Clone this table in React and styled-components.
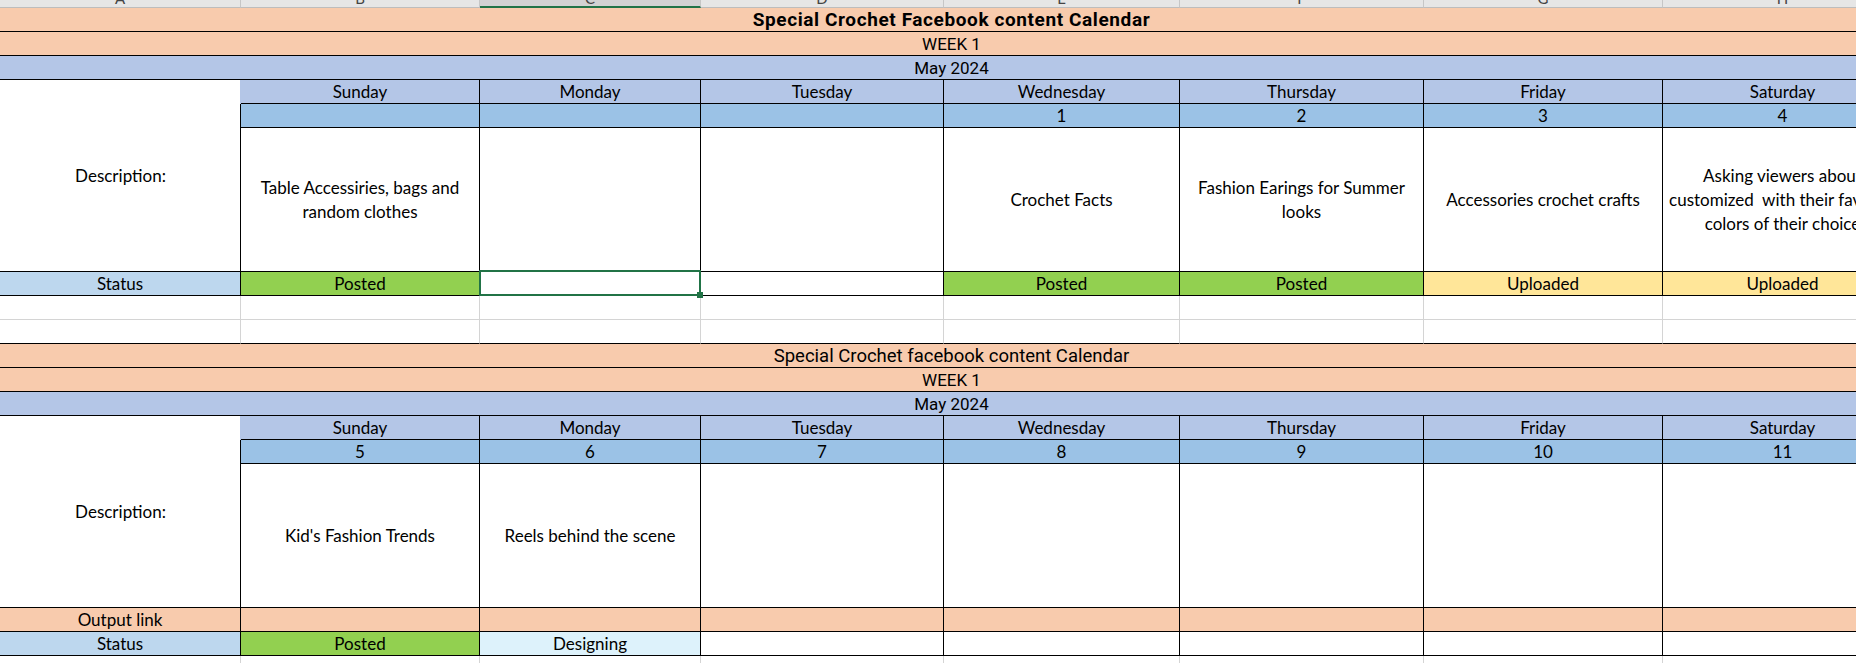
import React from 'react';
import styled, { createGlobalStyle, css } from 'styled-components';

const COLORS = {
  peach: '#f8cbad',
  lavender: '#b4c6e7',
  blue: '#9bc2e6',
  label: '#bdd7ee',
  green: '#92d050',
  yellow: '#ffe699',
  cyan: '#ddf2fb',
  grid: '#d4d4d4',
  ink: '#000000',
  excel: '#217346',
};

const STATUS_BG = {
  Posted: COLORS.green,
  Uploaded: COLORS.yellow,
  Designing: COLORS.cyan,
  '': '#ffffff',
};

const Global = createGlobalStyle`
  html, body { margin: 0; padding: 0; background: #ffffff; overflow: hidden; }
  body { font-family: Lato, "Liberation Sans", sans-serif; color: #000; }
`;

const Sheet = styled.div`
  display: grid;
  grid-template-columns: 241px 239px 221px 243px 236px 244px 239px 240px;
  grid-template-rows: 8px repeat(5, 24px) 144px repeat(8, 24px) 144px repeat(3, 24px);
  width: max-content;
  font-size: 17px;
  line-height: 20px;
`;

const HeadCell = styled.div`
  box-sizing: border-box;
  overflow: hidden;
  display: flex;
  justify-content: center;
  background: ${(p) => (p.$selected ? '#d2d2d2' : '#e6e6e6')};
  border-right: 1px solid #c6c6c6;
  border-bottom: ${(p) => (p.$selected ? `2px solid ${COLORS.excel}` : '1px solid #bdbdbd')};
  color: #444;
  font-size: 15px;
  line-height: 15px;
`;

const Letter = styled.span`
  margin-top: -9px;
`;

const cellBase = css`
  box-sizing: border-box;
  min-width: 0;
  display: flex;
  align-items: center;
  justify-content: center;
  text-align: center;
  white-space: pre;
  border-right: 1px solid ${(p) => (p.$grid ? COLORS.grid : COLORS.ink)};
  border-bottom: 1px solid ${(p) => (p.$gridBottom ? COLORS.grid : COLORS.ink)};
`;

const Banner = styled.div`
  box-sizing: border-box;
  grid-column: 1 / -1;
  display: flex;
  align-items: center;
  justify-content: center;
  background: ${(p) => p.$bg};
  border-bottom: 1px solid ${COLORS.ink};
  font-family: Roboto, Lato, sans-serif;
  font-weight: ${(p) => (p.$bold ? 700 : 400)};
  font-size: ${(p) => (p.$bold ? '19px' : p.$large ? '18.5px' : '17px')};
  letter-spacing: ${(p) => (p.$bold ? '0.6px' : 'normal')};
`;

const SideLabel = styled.div`
  box-sizing: border-box;
  grid-row: span 3;
  display: flex;
  align-items: center;
  justify-content: center;
  border-bottom: 1px solid ${COLORS.ink};
  background:
    linear-gradient(${COLORS.ink}, ${COLORS.ink}) right bottom / 1px calc(100% - 24px) no-repeat,
    linear-gradient(${COLORS.lavender}, ${COLORS.lavender}) right top / 1px 24px no-repeat,
    #ffffff;
`;

const DayCell = styled.div`
  ${cellBase};
  background: ${COLORS.lavender};
`;

const DateCell = styled.div`
  ${cellBase};
  background: ${COLORS.blue};
`;

const NoteCell = styled.div`
  ${cellBase};
  background: #ffffff;
  line-height: 24px;
  overflow: visible;
`;

const RowLabel = styled.div`
  ${cellBase};
  background: ${(p) => p.$bg};
`;

const StatusCell = styled.div`
  ${cellBase};
  position: relative;
  background: ${(p) => STATUS_BG[p.$status]};
`;

const PickedCell = styled(StatusCell)`
  &::after {
    content: '';
    position: absolute;
    left: -1px;
    top: -2px;
    right: -1px;
    bottom: -1px;
    border: 2px solid ${COLORS.excel};
    pointer-events: none;
  }
  &::before {
    content: '';
    position: absolute;
    right: -3px;
    bottom: -3px;
    width: 6px;
    height: 6px;
    background: ${COLORS.excel};
    z-index: 2;
  }
`;

const LinkCell = styled.div`
  ${cellBase};
  background: ${COLORS.peach};
`;

const BlankCell = styled.div`
  ${cellBase};
  background: #ffffff;
`;

const LETTERS = ['A', 'B', 'C', 'D', 'E', 'F', 'G', 'H'];
const DAYS = ['Sunday', 'Monday', 'Tuesday', 'Wednesday', 'Thursday', 'Friday', 'Saturday'];

const WEEKS = [
  {
    title: 'Special Crochet Facebook content Calendar',
    bold: true,
    dates: ['', '', '', '1', '2', '3', '4'],
    notes: [
      'Table Accessiries, bags and\nrandom clothes',
      '',
      '',
      'Crochet Facts',
      'Fashion Earings for Summer\nlooks',
      'Accessories crochet crafts',
      'Asking viewers about\ncustomized  with their favorite\ncolors of their choice',
    ],
    outputRow: false,
    statuses: ['Posted', '', '', 'Posted', 'Posted', 'Uploaded', 'Uploaded'],
    picked: 1,
  },
  {
    title: 'Special Crochet facebook content Calendar',
    bold: false,
    dates: ['5', '6', '7', '8', '9', '10', '11'],
    notes: ["Kid's Fashion Trends", 'Reels behind the scene', '', '', '', '', ''],
    outputRow: true,
    statuses: ['Posted', 'Designing', '', '', '', '', ''],
    picked: -1,
  },
];

function Week({ week }) {
  return (
    <>
      <Banner $bg={COLORS.peach} $bold={week.bold} $large>
        {week.title}
      </Banner>
      <Banner $bg={COLORS.peach}>WEEK 1</Banner>
      <Banner $bg={COLORS.lavender}>May 2024</Banner>
      <SideLabel>Description:</SideLabel>
      {DAYS.map((d) => (
        <DayCell key={d}>{d}</DayCell>
      ))}
      {week.dates.map((d, i) => (
        <DateCell key={i}>{d}</DateCell>
      ))}
      {week.notes.map((n, i) => (
        <NoteCell key={i}>{n}</NoteCell>
      ))}
      {week.outputRow && (
        <>
          <RowLabel $bg={COLORS.peach}>Output link</RowLabel>
          {DAYS.map((d) => (
            <LinkCell key={d} />
          ))}
        </>
      )}
      <RowLabel $bg={COLORS.label}>Status</RowLabel>
      {week.statuses.map((s, i) =>
        i === week.picked ? (
          <PickedCell key={i} $status={s}>{s}</PickedCell>
        ) : (
          <StatusCell key={i} $status={s}>{s}</StatusCell>
        )
      )}
    </>
  );
}

function BlankRow({ last }) {
  return LETTERS.map((l) => <BlankCell key={l} $grid $gridBottom={!last} />);
}

export default function App() {
  return (
    <>
      <Global />
      <Sheet>
        {LETTERS.map((l) => (
          <HeadCell key={l} $selected={l === 'C'}>
            <Letter>{l}</Letter>
          </HeadCell>
        ))}
        <Week week={WEEKS[0]} />
        <BlankRow />
        <BlankRow last />
        <Week week={WEEKS[1]} />
        <BlankRow />
      </Sheet>
    </>
  );
}
